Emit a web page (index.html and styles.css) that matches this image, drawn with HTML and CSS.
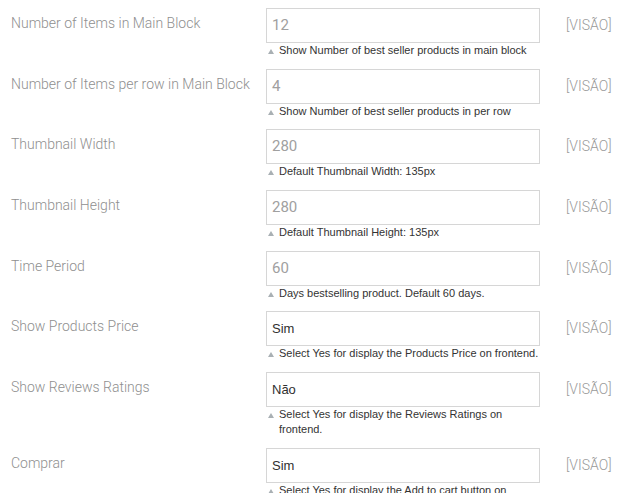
FILE: index.html
```html
<!DOCTYPE html>
<html lang="pt">
<head>
<meta charset="utf-8">
<title>Configurações</title>
<link rel="stylesheet" href="styles.css">
</head>
<body>
<div class="form">
  <div class="row">
    <div class="label">Number of Items in Main Block</div>
    <div class="field">
      <div class="input">12</div>
      <div class="note"><span class="tri"></span><span>Show Number of best seller products in main block</span></div>
    </div>
    <div class="scope">[VISÃO]</div>
  </div>
  <div class="row">
    <div class="label">Number of Items per row in Main Block</div>
    <div class="field">
      <div class="input">4</div>
      <div class="note"><span class="tri"></span><span>Show Number of best seller products in per row</span></div>
    </div>
    <div class="scope">[VISÃO]</div>
  </div>
  <div class="row">
    <div class="label">Thumbnail Width</div>
    <div class="field">
      <div class="input">280</div>
      <div class="note"><span class="tri"></span><span>Default Thumbnail Width: 135px</span></div>
    </div>
    <div class="scope">[VISÃO]</div>
  </div>
  <div class="row">
    <div class="label">Thumbnail Height</div>
    <div class="field">
      <div class="input">280</div>
      <div class="note"><span class="tri"></span><span>Default Thumbnail Height: 135px</span></div>
    </div>
    <div class="scope">[VISÃO]</div>
  </div>
  <div class="row">
    <div class="label">Time Period</div>
    <div class="field">
      <div class="input">60</div>
      <div class="note"><span class="tri"></span><span>Days bestselling product. Default 60 days.</span></div>
    </div>
    <div class="scope">[VISÃO]</div>
  </div>
  <div class="row">
    <div class="label">Show Products Price</div>
    <div class="field">
      <div class="input select">Sim</div>
      <div class="note"><span class="tri"></span><span>Select Yes for display the Products Price on frontend.</span></div>
    </div>
    <div class="scope">[VISÃO]</div>
  </div>
  <div class="row">
    <div class="label">Show Reviews Ratings</div>
    <div class="field">
      <div class="input select">Não</div>
      <div class="note"><span class="tri"></span><span>Select Yes for display the Reviews Ratings on frontend.</span></div>
    </div>
    <div class="scope">[VISÃO]</div>
  </div>
  <div class="row">
    <div class="label">Comprar</div>
    <div class="field">
      <div class="input select">Sim</div>
      <div class="note"><span class="tri"></span><span>Select Yes for display the Add to cart button on frontend.</span></div>
    </div>
    <div class="scope">[VISÃO]</div>
  </div>
</div>
</body>
</html>
```
FILE: styles.css
```css
html, body {
  margin: 0;
  padding: 0;
  background: #fff;
}
body {
  overflow: hidden;
  height: 493px;
}
.form {
  padding: 8px 0 0 11px;
}
.row {
  display: grid;
  grid-template-columns: 255px 274px auto;
  padding-bottom: 10.67px;
}
.label {
  font-family: Roboto, "Liberation Sans", sans-serif;
  font-weight: 300;
  font-size: 14px;
  line-height: 20px;
  padding-top: 5px;
  color: #8f8f8f;
  padding-right: 4px;
}
.field {
  display: flex;
  flex-direction: column;
}
.input {
  box-sizing: border-box;
  height: 35px;
  border: 1px solid #d6d6d6;
  padding-left: 5px;
  font-family: Roboto, "Liberation Sans", sans-serif;
  font-size: 15px;
  line-height: 33px;
  color: #a0a0a0;
}
.input.select {
  font-family: "Liberation Sans", Arial, sans-serif;
  font-size: 13px;
  color: #303030;
}
.note {
  display: flex;
  align-items: flex-start;
  font-family: "Liberation Sans", Arial, sans-serif;
  font-size: 11px;
  line-height: 15px;
  color: #333;
}
.tri {
  flex: none;
  width: 0;
  height: 0;
  margin: 6px 5px 0 2px;
  border-left: 3px solid transparent;
  border-right: 3px solid transparent;
  border-bottom: 5px solid #a9b0b4;
}
.scope {
  margin-left: 26px;
  font-family: Roboto, "Liberation Sans", sans-serif;
  font-weight: 300;
  font-size: 14px;
  line-height: 20px;
  padding-top: 7px;
  color: #9a9a9a;
}
```
